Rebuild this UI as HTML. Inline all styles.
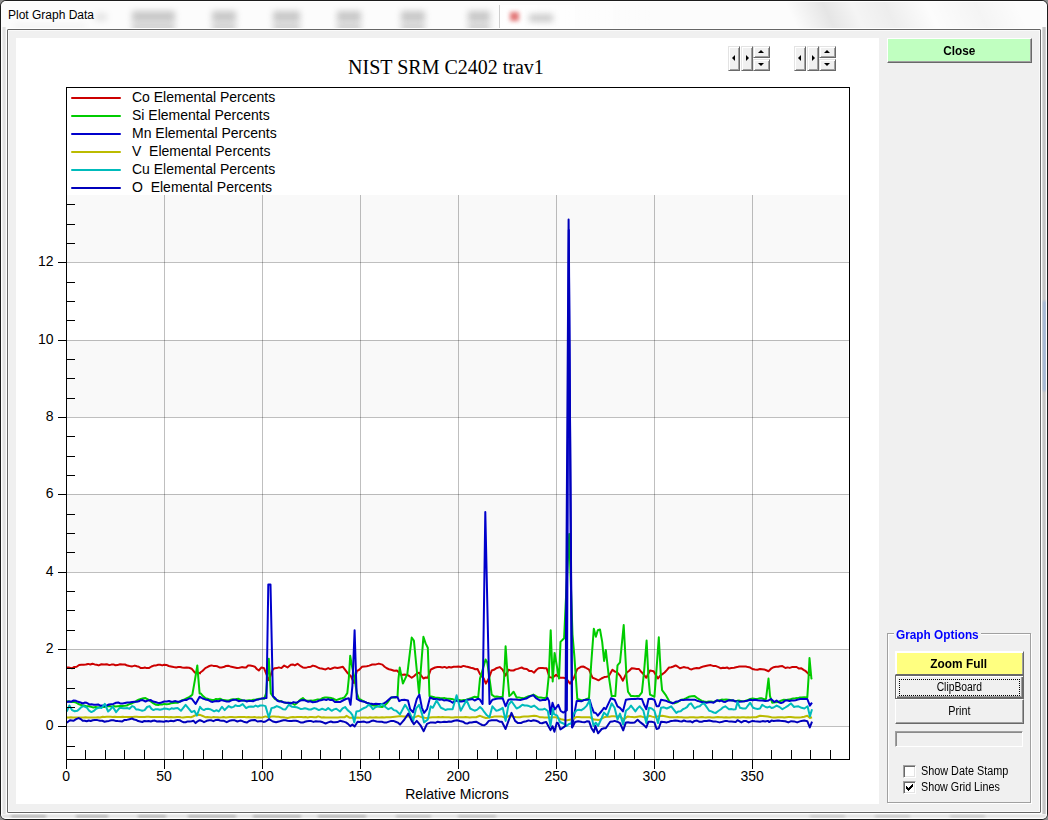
<!DOCTYPE html>
<html><head><meta charset="utf-8"><title>Plot Graph Data</title>
<style>
html,body{margin:0;padding:0}
body{width:1048px;height:820px;overflow:hidden;position:relative;background:#8c8c8c;font-family:"Liberation Sans",sans-serif}
.win{position:absolute;left:0;top:0;width:1046px;height:818px;border:1px solid #1c1c1c;border-radius:6px;background:#fcfcfc;overflow:hidden}
.glass{position:absolute;left:0;top:0;width:1046px;height:818px;box-shadow:inset 0 0 0 1px #fff;border-radius:5px;z-index:3}
.blob{position:absolute;background:#808080;filter:blur(3px);opacity:.42}
.title{position:absolute;left:8px;top:8px;font-size:12px;line-height:14px;color:#000;white-space:nowrap;text-shadow:0 0 6px #fff,0 0 6px #fff}
.client{position:absolute;left:7px;top:29px;width:1032px;height:782px;border:1px solid #666;background:#f0f0f0;box-shadow:0 0 0 1px #fff, inset 0 0 0 1px #fafafa;border-radius:1px}
.panel{position:absolute;left:16px;top:38px;width:863px;height:766px;background:#fff}
.chart{position:absolute;left:0;top:0}
.lg{font-family:"Liberation Sans",sans-serif;font-size:14px;fill:#000}
.ttl{font-family:"Liberation Serif",serif;font-size:20px;fill:#000}
.spin{position:absolute;top:46px;width:42px;height:25px}
.b3{position:absolute;box-sizing:border-box;background:#f0f0f0;border:1px solid;border-color:#e3e3e3 #696969 #696969 #e3e3e3;box-shadow:inset 1px 1px 0 #fff, inset -1px -1px 0 #a0a0a0}
.b3 svg{position:absolute;left:-1px;top:-1px}
.btn{position:absolute;box-sizing:border-box;border:1px solid;border-color:#fff #696969 #696969 #fff;box-shadow:inset -1px -1px 0 #a0a0a0;background:#f0f0f0;text-align:center;font-size:12px;white-space:nowrap}
.btn span{display:inline-block;transform-origin:center;position:relative;top:1px}
.grp{position:absolute;left:887px;top:633px;width:142px;height:168px;border:1px solid #a0a0a0;box-shadow:1px 1px 0 #fff, inset 1px 1px 0 #fff}
.grpt{position:absolute;left:893.6px;top:627.5px;width:83px;background:#f0f0f0;padding:0 2px;font-weight:bold;font-size:12px;line-height:15px;color:#0000ff;white-space:nowrap}
.grpt span,.lbl span{display:inline-block;transform-origin:left center}
.edit{position:absolute;left:895px;top:731px;width:126px;height:14px;border:1px solid;border-color:#a0a0a0 #fff #fff #a0a0a0;box-shadow:inset 1px 1px 0 #8a8a8a;background:#f0f0f0}
.cb{position:absolute;left:903px;width:9px;height:9px;border:1px solid;border-color:#a0a0a0 #fff #fff #a0a0a0;box-shadow:inset 1px 1px 0 #696969, inset -1px -1px 0 #e3e3e3;background:#fff;padding:1px}
#tClose{transform:scaleX(.98)} #tGO{transform:scaleX(.984)} #tZF{transform:scaleX(.988)} #tCB{transform:scaleX(.861)} #tPr{transform:scaleX(.90)} #tDS{transform:scaleX(.903)} #tGL{transform:scaleX(.895)}
.lbl{position:absolute;left:921px;font-size:12px;line-height:14px;white-space:nowrap;color:#000}
</style></head><body>
<div class="win"><div class="glass"></div>
<div class="blob" style="left:131px;top:10px;width:43px;height:11px"></div>
<div class="blob" style="left:131px;top:23px;width:43px;height:7px;opacity:.4"></div>
<div class="blob" style="left:211px;top:10px;width:24px;height:11px"></div>
<div class="blob" style="left:211px;top:23px;width:24px;height:7px;opacity:.4"></div>
<div class="blob" style="left:272px;top:10px;width:27px;height:11px"></div>
<div class="blob" style="left:272px;top:23px;width:27px;height:7px;opacity:.4"></div>
<div class="blob" style="left:336px;top:10px;width:24px;height:11px"></div>
<div class="blob" style="left:336px;top:23px;width:24px;height:7px;opacity:.4"></div>
<div class="blob" style="left:400px;top:10px;width:24px;height:11px"></div>
<div class="blob" style="left:400px;top:23px;width:24px;height:7px;opacity:.4"></div>
<div class="blob" style="left:467px;top:10px;width:22px;height:11px"></div>
<div class="blob" style="left:467px;top:23px;width:22px;height:7px;opacity:.4"></div>
<div class="blob" style="left:94px;top:12px;width:12px;height:8px;opacity:.18"></div><div class="blob" style="left:14px;top:24px;width:70px;height:3px;opacity:.12"></div>
<div style="position:absolute;left:498px;top:4px;width:150px;height:25px;background:linear-gradient(to right,#fff,rgba(255,255,255,0));border-left:1px solid #cfcfcf;filter:blur(.6px)"></div>
<div class="blob" style="left:509px;top:11px;width:9px;height:9px;background:#d02020;opacity:.6;filter:blur(2px)"></div>
<div class="blob" style="left:528px;top:13px;width:24px;height:8px;opacity:.4"></div>
<div style="position:absolute;left:640px;top:1px;width:400px;height:28px;background:linear-gradient(65deg,rgba(0,0,0,0) 38%,rgba(0,0,0,.09) 47%,rgba(0,0,0,.03) 54%,rgba(0,0,0,.06) 62%,rgba(0,0,0,0) 72%,rgba(0,0,0,.03) 84%,rgba(0,0,0,0) 94%)"></div>
<div style="position:absolute;left:1px;top:26px;width:4px;height:788px;background:linear-gradient(to right,#f4f4f4,#dcdcdc 50%,#f0f0f0)"></div>
<div style="position:absolute;left:1041px;top:26px;width:4px;height:788px;background:linear-gradient(to right,#e4e4e4,#bcbcbc 50%,#dcdcdc)"></div>
<div style="position:absolute;left:1042px;top:300px;width:3px;height:90px;background:#9fb6d8;filter:blur(1px)"></div>
<div style="position:absolute;left:0;top:813px;width:1046px;height:4px;background:linear-gradient(to bottom,#f6f6f6,#e2e2e2 50%,#f2f2f2)"></div>
<div class="blob" style="left:10px;top:814px;width:35px;height:3px;opacity:0.5;filter:blur(1.5px)"></div>
<div class="blob" style="left:75px;top:814px;width:32px;height:3px;opacity:0.5;filter:blur(1.5px)"></div>
<div class="blob" style="left:137px;top:814px;width:28px;height:3px;opacity:0.5;filter:blur(1.5px)"></div>
<div class="blob" style="left:187px;top:814px;width:48px;height:3px;opacity:0.5;filter:blur(1.5px)"></div>
<div class="blob" style="left:252px;top:814px;width:48px;height:3px;opacity:0.5;filter:blur(1.5px)"></div>
<div class="blob" style="left:317px;top:814px;width:48px;height:3px;opacity:0.5;filter:blur(1.5px)"></div>
<div class="blob" style="left:395px;top:814px;width:35px;height:3px;opacity:0.4;filter:blur(1.5px)"></div>
<div class="blob" style="left:457px;top:814px;width:38px;height:3px;opacity:0.4;filter:blur(1.5px)"></div>
<div class="blob" style="left:809px;top:814px;width:35px;height:3px;opacity:0.3;filter:blur(1.5px)"></div>
<div class="blob" style="left:874px;top:814px;width:35px;height:3px;opacity:0.3;filter:blur(1.5px)"></div>
<div class="blob" style="left:949px;top:814px;width:35px;height:3px;opacity:0.3;filter:blur(1.5px)"></div>
</div>
<div class="title">Plot Graph Data</div>
<div class="client"></div>
<div class="panel"></div>
<svg class="chart" width="1048" height="820" viewBox="0 0 1048 820">
<rect x="67" y="649" width="781" height="77" fill="#f9f9f9"/>
<rect x="67" y="494" width="781" height="78" fill="#f9f9f9"/>
<rect x="67" y="340" width="781" height="77" fill="#f9f9f9"/>
<rect x="67" y="195" width="781" height="67" fill="#f9f9f9"/>
<path d="M67 726.5H849" stroke="#000" stroke-opacity=".25" stroke-width="1" fill="none" shape-rendering="crispEdges"/>
<path d="M67 649.5H849" stroke="#000" stroke-opacity=".25" stroke-width="1" fill="none" shape-rendering="crispEdges"/>
<path d="M67 572.5H849" stroke="#000" stroke-opacity=".25" stroke-width="1" fill="none" shape-rendering="crispEdges"/>
<path d="M67 494.5H849" stroke="#000" stroke-opacity=".25" stroke-width="1" fill="none" shape-rendering="crispEdges"/>
<path d="M67 417.5H849" stroke="#000" stroke-opacity=".25" stroke-width="1" fill="none" shape-rendering="crispEdges"/>
<path d="M67 340.5H849" stroke="#000" stroke-opacity=".25" stroke-width="1" fill="none" shape-rendering="crispEdges"/>
<path d="M67 262.5H849" stroke="#000" stroke-opacity=".25" stroke-width="1" fill="none" shape-rendering="crispEdges"/>
<path d="M164.5 195V759" stroke="#000" stroke-opacity=".25" stroke-width="1" fill="none" shape-rendering="crispEdges"/>
<path d="M262.5 195V759" stroke="#000" stroke-opacity=".25" stroke-width="1" fill="none" shape-rendering="crispEdges"/>
<path d="M360.5 195V759" stroke="#000" stroke-opacity=".25" stroke-width="1" fill="none" shape-rendering="crispEdges"/>
<path d="M458.5 195V759" stroke="#000" stroke-opacity=".25" stroke-width="1" fill="none" shape-rendering="crispEdges"/>
<path d="M556.5 195V759" stroke="#000" stroke-opacity=".25" stroke-width="1" fill="none" shape-rendering="crispEdges"/>
<path d="M654.5 195V759" stroke="#000" stroke-opacity=".25" stroke-width="1" fill="none" shape-rendering="crispEdges"/>
<path d="M752.5 195V759" stroke="#000" stroke-opacity=".25" stroke-width="1" fill="none" shape-rendering="crispEdges"/>
<polyline points="66.7,667.4 69.3,667.6 72.0,668.3 74.3,666.9 76.7,666.7 79.1,665.0 81.4,664.7 83.6,664.7 85.8,664.4 88.1,663.9 90.3,664.5 92.5,663.8 94.7,664.4 96.7,664.8 98.7,665.4 101.4,664.3 104.1,664.4 106.8,664.2 109.4,665.1 111.4,664.6 113.4,664.4 115.4,665.2 117.4,665.1 120.1,664.2 122.8,664.4 125.0,664.5 127.3,665.6 129.5,666.0 132.2,666.4 134.8,665.6 136.8,666.3 138.8,666.7 140.8,668.1 142.8,668.1 144.8,667.5 146.8,668.1 149.2,667.9 151.5,666.5 153.8,665.6 156.2,665.4 158.2,664.7 160.2,664.8 162.2,665.4 164.2,664.8 166.4,664.9 168.7,666.0 170.9,666.5 173.6,667.1 176.2,667.4 178.2,667.0 180.2,667.0 182.2,667.5 184.2,667.8 186.7,667.5 189.1,667.8 191.6,668.7 194.9,672.7 197.4,672.6 200.0,673.4 200.0,672.7 202.7,670.7 205.3,668.1 207.3,667.1 209.4,666.0 211.4,665.4 213.4,665.9 215.4,666.1 217.4,666.3 219.4,667.4 221.4,667.4 223.6,667.1 225.9,666.0 228.1,665.8 230.3,666.4 232.5,666.9 234.7,667.4 237.0,667.9 239.4,667.7 241.8,667.1 244.1,667.4 246.1,667.4 248.1,665.5 250.1,665.4 252.4,665.9 254.8,666.7 256.8,669.0 258.8,670.5 261.5,667.4 264.1,668.3 268.8,680.1 272.8,669.4 274.8,668.2 276.8,668.1 278.8,667.4 281.5,668.1 284.2,665.6 287.5,667.4 290.8,664.7 292.8,664.4 294.8,665.4 297.5,663.8 300.2,665.8 302.9,667.4 304.9,667.8 306.9,667.4 308.9,666.9 310.9,666.7 312.9,665.6 315.2,666.2 317.6,667.4 319.6,668.2 321.6,668.5 323.6,669.0 325.6,669.4 328.2,668.1 330.2,669.1 332.5,668.2 334.9,667.4 337.4,667.9 340.0,667.4 342.9,666.8 347.3,672.7 351.0,676.3 353.9,682.9 356.8,671.2 359.4,669.6 361.9,666.8 364.4,666.4 366.8,666.2 369.3,665.6 372.2,664.5 375.1,664.6 378.8,663.6 382.4,664.6 384.6,666.7 386.8,668.3 389.0,669.2 391.2,669.7 394.1,670.8 397.1,670.5 399.2,673.2 401.4,674.9 404.4,674.6 407.3,674.9 409.5,676.2 411.7,677.8 413.9,676.2 416.1,674.1 419.0,672.7 423.4,678.5 425.6,677.5 427.8,677.8 430.7,669.7 432.9,668.5 435.1,667.5 437.5,667.0 440.0,667.0 442.4,667.5 444.6,666.9 446.8,667.9 449.0,667.0 451.2,667.5 453.6,666.8 456.1,666.7 458.5,666.5 460.9,667.0 463.4,665.9 465.8,666.5 468.2,667.0 470.7,667.8 473.1,668.3 475.3,669.2 477.5,669.0 480.0,674.1 483.7,678.5 485.9,683.6 488.8,678.5 491.7,670.5 493.9,669.8 496.1,668.3 499.7,667.1 502.7,669.7 505.6,675.6 508.5,669.7 511.1,670.6 513.6,670.5 515.6,669.4 517.7,668.9 519.7,668.1 521.7,667.5 524.2,668.8 526.8,669.0 529.2,670.9 531.7,671.0 534.1,672.7 536.3,670.0 538.5,668.3 540.5,667.9 542.5,667.9 544.6,668.3 546.6,668.3 549.5,677.1 552.4,677.8 556.1,674.9 558.3,676.5 560.5,677.8 563.4,677.8 566.3,678.5 570.0,683.6 573.6,678.5 577.3,669.0 580.9,666.8 583.1,666.5 585.3,667.5 589.0,669.7 592.6,677.8 595.5,678.9 598.5,680.3 601.4,678.5 604.3,677.1 606.5,676.8 608.7,676.3 612.4,669.7 614.6,671.4 616.8,671.9 620.0,675.6 622.9,680.7 626.6,672.7 629.2,670.8 631.7,668.3 634.1,668.6 636.6,668.9 639.0,669.0 641.2,671.8 643.4,674.1 646.3,677.8 650.0,670.5 653.6,671.2 658.0,678.5 660.2,675.7 662.4,674.1 664.6,672.5 666.8,670.1 669.0,667.5 671.2,667.3 673.4,666.5 675.6,665.4 677.8,666.7 680.0,668.3 683.6,667.1 685.6,667.5 687.7,667.7 689.7,669.0 691.7,669.4 694.1,668.4 696.6,668.1 699.0,668.3 701.2,667.2 703.4,666.4 705.6,665.9 707.8,665.4 710.7,665.1 713.6,666.1 716.0,666.1 718.5,667.1 720.9,668.3 723.0,667.7 725.0,668.0 727.1,667.5 729.1,668.6 731.2,668.0 734.1,667.7 737.0,667.1 739.2,666.5 741.4,666.5 743.6,666.4 745.8,666.5 748.0,667.1 750.2,667.6 752.4,669.0 754.9,669.5 757.5,669.7 760.0,669.0 762.0,669.2 764.1,669.4 766.3,670.3 768.5,671.2 771.5,668.3 773.7,667.2 775.8,666.7 778.0,666.8 780.2,666.2 782.4,666.1 785.4,668.0 787.6,667.4 789.7,667.9 791.9,667.1 794.3,666.9 796.6,667.0 799.0,668.6 801.4,668.3 803.6,669.8 805.8,671.2 809.5,674.9 812.0,674.9" fill="none" stroke="#cc0000" stroke-width="2" stroke-linejoin="round" stroke-linecap="butt"/>
<polyline points="66.7,701.5 68.9,701.3 71.2,701.9 73.4,702.1 75.5,702.3 77.6,703.5 79.8,704.6 81.9,705.2 84.0,705.5 86.3,706.2 88.7,706.3 91.1,706.9 93.4,707.5 95.7,707.0 98.1,707.4 100.4,707.0 102.7,706.8 104.8,706.9 107.0,706.3 109.1,706.1 111.3,706.6 113.4,706.1 115.6,706.5 117.9,706.3 120.1,706.1 122.3,706.0 124.6,705.8 126.8,705.5 128.8,704.4 130.8,703.8 132.8,702.8 134.8,702.1 137.0,700.5 139.3,699.4 141.5,698.8 143.5,698.2 145.5,698.1 148.2,699.6 150.8,701.5 153.5,703.3 156.2,704.8 158.2,705.0 160.2,704.3 162.2,704.6 164.2,703.9 166.4,704.2 168.7,704.0 170.9,703.2 173.1,702.9 175.4,702.7 177.6,702.8 179.9,701.3 182.2,700.2 184.6,699.4 186.9,698.1 189.6,696.9 192.3,694.8 194.9,680.1 197.3,665.4 199.6,693.4 200.7,693.4 203.0,696.1 205.3,698.1 207.5,698.7 209.8,699.6 212.0,700.1 214.0,700.1 216.0,699.0 218.0,699.3 220.0,698.8 222.2,699.7 224.5,700.1 226.7,700.4 228.7,700.4 230.7,699.8 232.7,699.3 234.7,699.6 236.7,698.9 238.7,698.8 240.9,699.8 243.2,700.6 245.4,700.8 247.4,700.4 249.4,700.2 251.4,700.5 253.4,699.8 255.5,699.8 257.7,699.1 259.8,698.8 262.0,698.7 264.1,698.8 266.1,693.4 268.8,658.7 270.8,693.4 274.8,698.8 276.8,700.0 278.8,700.8 280.8,700.9 282.8,702.1 284.8,702.6 286.8,702.9 288.8,702.8 290.8,702.8 292.8,703.7 294.8,704.8 296.8,703.2 298.9,701.1 300.9,699.3 302.9,698.1 304.9,699.9 306.9,700.8 308.9,700.8 310.9,700.5 312.9,700.7 314.9,700.1 316.9,699.6 318.9,699.6 320.9,699.1 322.9,698.0 324.9,697.6 326.9,697.4 329.1,697.7 331.4,698.1 333.6,698.8 336.3,700.1 340.0,698.8 342.2,698.2 344.4,697.5 347.3,693.1 348.8,678.5 350.2,655.8 352.4,668.3 354.6,678.5 356.8,693.1 359.0,699.0 361.4,700.0 363.9,701.4 366.3,702.7 368.7,703.3 371.2,705.0 373.6,705.6 375.8,705.8 378.0,706.3 380.2,706.7 382.4,707.0 384.6,705.6 386.8,703.4 391.2,697.5 393.3,697.2 395.4,697.5 397.5,696.8 398.5,678.5 399.7,667.5 402.9,683.6 407.3,674.1 411.7,637.6 413.9,640.5 419.0,693.1 423.4,636.8 425.6,643.4 427.8,647.8 429.5,696.1 432.3,696.8 435.1,697.5 437.5,697.8 440.0,698.1 442.4,698.3 444.7,698.1 447.1,698.8 449.4,698.8 451.8,698.9 454.1,699.7 456.5,700.3 459.0,699.9 461.4,700.5 463.8,700.0 466.3,699.7 468.7,699.0 471.6,698.0 474.6,696.8 478.2,697.5 480.0,678.5 482.2,671.2 485.6,659.5 487.3,662.4 489.5,678.5 491.7,694.6 494.6,696.8 496.6,696.6 498.6,696.8 500.7,696.9 502.7,696.8 504.1,678.5 505.6,646.3 507.8,678.5 509.3,696.1 511.5,694.2 513.6,691.7 516.6,697.5 519.0,697.4 521.5,698.1 523.9,698.3 526.3,697.1 528.6,696.2 531.0,695.8 533.4,694.6 536.0,696.1 538.5,697.5 540.5,697.6 542.5,697.8 544.6,697.9 546.6,697.5 548.8,675.6 550.7,630.2 552.7,681.4 554.6,652.9 559.0,678.5 560.5,641.9 564.1,638.3 566.3,590.7 569.2,534.0 572.5,634.6 574.4,656.6 577.3,699.0 579.8,699.7 582.4,700.5 584.6,699.9 586.8,699.0 589.0,698.3 591.2,663.9 593.8,628.8 595.9,636.8 597.8,630.2 600.0,629.5 602.2,641.9 604.1,661.0 605.8,650.0 608.7,675.6 611.7,696.1 615.3,696.1 617.5,665.4 620.0,662.4 623.7,625.1 626.6,678.5 628.0,691.7 631.0,696.1 633.0,696.1 635.0,696.3 637.0,696.1 639.0,696.1 641.9,692.4 644.1,671.2 646.6,640.5 648.5,678.5 650.0,694.6 652.2,695.7 654.4,696.8 656.6,668.3 658.8,637.3 661.0,678.5 662.1,690.2 665.4,694.6 669.7,701.9 671.9,702.6 674.1,703.4 676.5,702.6 679.0,701.1 681.4,699.7 683.9,699.1 686.3,698.2 688.8,696.8 691.7,696.2 694.6,696.1 697.2,698.0 699.7,699.7 701.9,700.9 704.1,701.5 706.3,701.9 708.7,701.5 711.2,701.5 713.6,701.9 716.5,701.0 719.5,700.2 721.7,699.6 723.9,699.7 726.1,699.4 728.3,699.7 730.5,700.1 732.6,700.5 734.8,700.9 737.0,700.8 739.4,700.6 741.9,701.3 744.3,701.2 747.2,700.3 750.2,699.0 752.7,698.5 755.1,699.0 757.5,698.9 760.0,698.3 762.0,698.3 764.0,699.2 766.0,699.0 768.5,678.5 770.0,696.1 772.2,702.7 775.1,702.2 778.0,701.9 781.0,700.8 783.9,699.7 786.3,700.0 788.8,699.6 791.2,699.0 793.2,698.4 795.3,698.3 797.3,698.1 799.4,697.6 801.4,697.5 804.3,697.2 807.3,697.5 808.5,678.5 809.5,658.0 811.4,678.5 812.0,677.8" fill="none" stroke="#00cc00" stroke-width="2" stroke-linejoin="round" stroke-linecap="butt"/>
<polyline points="66.7,702.1 69.0,701.6 71.3,701.7 73.7,700.5 76.0,700.8 78.2,701.8 80.5,702.5 82.7,703.5 84.7,702.6 86.7,702.8 89.4,704.4 91.6,704.3 93.8,704.8 95.9,704.8 98.1,704.4 100.3,705.7 102.5,705.6 104.6,705.9 106.8,705.5 109.0,704.5 111.2,704.2 113.4,703.9 116.1,702.8 118.3,702.5 120.6,703.6 122.8,703.5 125.0,702.9 127.3,702.4 129.5,702.5 132.2,702.0 134.8,701.7 136.8,701.8 138.8,701.3 140.8,700.2 142.8,700.1 145.5,701.5 148.2,700.4 150.8,700.1 153.0,701.5 155.3,702.0 157.5,702.8 159.5,702.9 161.5,702.5 164.2,701.5 166.9,701.5 169.0,701.0 171.2,701.8 173.3,701.5 175.5,701.1 177.6,701.7 179.8,701.7 182.0,700.8 184.2,700.1 186.7,699.9 189.1,698.5 191.6,698.5 195.6,703.9 199.6,696.8 200.0,696.8 202.7,698.5 205.3,699.4 208.0,699.9 210.7,701.5 212.7,701.9 214.7,701.3 216.7,701.1 218.7,701.2 221.4,700.1 224.1,700.9 226.7,701.5 229.0,701.6 231.4,700.4 233.8,699.8 236.1,699.8 238.7,701.2 240.7,700.8 242.7,700.4 244.8,700.6 246.8,701.5 249.0,700.9 251.2,700.9 253.4,701.2 256.1,699.8 258.8,699.4 261.4,698.6 263.9,698.2 266.5,698.0 268.3,584.4 270.5,584.4 272.9,696.1 275.2,698.2 277.5,700.8 279.5,701.6 281.5,701.5 283.5,702.3 285.5,702.8 288.1,702.8 290.8,703.5 293.5,702.1 296.2,702.8 298.4,701.7 300.7,700.4 302.9,700.1 305.5,700.6 308.2,701.7 310.4,701.3 312.7,702.2 314.9,702.1 317.2,701.5 319.5,700.4 321.9,700.0 324.2,699.4 326.2,700.0 328.2,699.1 330.3,700.1 332.3,699.8 334.9,702.1 337.4,702.0 340.0,702.1 342.9,700.5 345.9,699.0 348.8,698.3 350.5,704.8 352.4,685.8 354.6,630.2 356.8,699.0 359.4,700.5 361.9,701.2 364.4,701.8 366.8,702.7 369.3,703.4 371.5,703.8 373.6,704.3 375.8,703.7 378.0,704.1 380.9,704.1 383.9,703.4 386.3,701.7 388.8,699.6 391.2,697.5 393.3,697.3 395.4,697.1 397.5,697.2 399.2,701.2 401.8,699.9 404.4,699.7 408.0,700.5 410.2,709.2 413.1,712.2 416.8,699.0 419.4,694.6 421.9,707.8 424.1,712.9 427.0,709.2 430.0,697.5 433.6,699.0 436.6,698.9 439.5,699.7 441.7,699.4 443.9,700.4 446.1,700.0 448.3,700.5 450.5,701.2 452.6,702.7 454.8,701.1 457.0,700.5 459.2,701.5 461.4,701.6 464.4,701.1 467.3,699.7 469.9,699.6 472.4,699.0 474.6,700.5 478.2,698.7 480.0,699.7 482.6,704.0 485.3,512.0 489.5,704.1 492.4,699.7 494.5,699.2 496.5,698.8 498.6,698.6 500.6,698.5 502.7,698.3 505.6,706.3 508.5,699.7 510.9,699.3 513.2,699.6 515.6,699.4 518.0,699.7 521.0,699.9 523.9,699.0 526.3,698.6 528.6,697.2 531.0,695.9 533.4,695.3 536.0,698.1 538.5,699.7 540.0,700.5 542.8,700.1 545.5,700.1 547.4,697.8 549.0,700.9 550.5,714.1 552.5,702.8 554.8,709.5 558.3,704.8 560.7,711.0 563.4,712.6 566.9,710.2 568.8,230.1 572.0,727.0 576.7,700.9 579.0,700.9 581.4,701.3 584.1,699.9 586.8,699.7 589.6,699.7 591.5,706.3 593.9,712.6 595.8,713.0 597.8,715.7 601.7,711.0 604.0,707.9 605.8,709.2 610.9,698.3 614.6,699.7 617.5,706.3 620.0,707.8 622.9,711.4 625.9,699.7 628.8,699.2 631.7,699.0 633.7,699.0 635.8,699.0 637.8,698.6 639.9,699.0 641.9,699.0 644.1,704.8 646.3,709.2 648.5,699.0 651.5,698.8 654.4,699.7 656.6,706.3 658.8,706.3 661.0,699.7 663.4,700.2 665.9,700.7 668.3,701.9 670.5,702.5 672.7,703.4 675.6,701.8 678.5,701.2 680.9,700.1 683.4,700.0 685.8,699.7 688.0,699.4 690.2,699.8 692.4,699.7 694.6,699.7 697.0,700.7 699.5,701.4 701.9,701.9 704.2,702.3 706.6,702.7 708.9,702.2 711.3,702.3 713.6,702.7 717.3,700.2 719.3,701.2 721.3,700.6 723.3,701.7 725.3,701.9 729.0,700.2 731.0,700.6 733.0,700.2 735.0,701.4 737.0,701.2 739.4,701.7 741.9,701.4 744.3,701.2 747.2,700.7 750.2,699.7 752.7,700.3 755.1,699.7 757.5,700.3 760.0,700.5 762.6,700.6 765.2,701.1 767.8,700.8 771.0,699.0 774.4,701.9 776.6,700.5 778.8,702.2 781.0,703.1 783.2,702.2 785.4,700.5 787.4,700.5 789.5,700.9 791.5,700.5 793.6,700.5 795.6,700.2 797.8,699.6 800.0,699.0 802.2,698.9 804.4,699.0 807.3,699.0 809.9,705.6 812.0,702.7" fill="none" stroke="#0000cc" stroke-width="2" stroke-linejoin="round" stroke-linecap="butt"/>
<polyline points="66.7,717.5 68.8,717.4 70.9,717.3 73.0,717.6 75.0,717.5 77.1,717.6 79.2,717.6 81.3,717.6 83.4,717.5 85.5,717.3 87.6,717.6 89.7,717.6 91.8,717.5 93.8,717.5 95.9,717.6 98.0,717.3 100.1,717.5 102.7,716.8 104.7,716.9 106.7,716.7 108.7,716.7 110.7,716.7 112.7,716.9 114.7,716.7 116.7,717.0 118.7,717.1 120.7,716.9 122.7,716.8 124.8,716.9 126.8,717.0 128.8,717.0 130.8,717.0 132.8,717.0 134.8,716.8 136.8,716.8 138.8,716.9 140.8,717.1 142.8,716.9 144.8,717.0 146.8,716.8 148.8,716.8 150.8,716.9 152.8,717.1 154.8,717.1 156.8,717.1 158.8,717.0 160.8,717.1 162.8,717.1 164.8,717.1 166.8,716.9 168.9,717.3 170.9,717.0 172.9,717.3 174.9,717.3 176.9,716.9 178.9,717.1 180.9,717.3 182.9,717.4 184.9,717.2 186.9,717.1 188.9,717.1 190.9,717.2 192.9,716.5 194.9,715.5 197.2,715.0 199.6,714.8 200.0,714.8 202.7,716.0 205.3,717.2 207.4,717.1 209.4,717.2 211.5,717.4 213.5,717.1 215.6,717.3 217.6,717.2 219.7,717.4 221.7,717.3 223.8,717.1 225.8,717.4 227.9,717.2 229.9,717.0 232.0,717.0 234.1,717.2 236.1,717.2 238.2,717.1 240.2,717.1 242.3,717.1 244.3,717.1 246.4,717.3 248.4,717.0 250.5,717.3 252.5,717.3 254.6,717.0 256.6,717.4 258.7,717.3 260.7,717.4 262.8,717.2 265.5,716.4 268.8,717.5 272.1,716.4 274.2,716.5 276.4,716.7 278.5,716.8 280.7,717.2 282.8,717.2 285.1,717.6 287.5,717.9 290.8,717.2 292.9,717.1 295.0,717.2 297.1,717.1 299.3,717.0 301.4,717.0 303.5,717.3 305.6,717.1 307.7,717.4 309.9,717.1 312.0,717.1 314.1,717.2 316.2,717.2 318.2,716.4 321.6,717.5 323.6,717.3 325.7,717.4 327.7,717.6 329.8,717.5 331.8,717.5 333.9,717.4 335.9,717.4 338.0,717.4 340.0,717.2 342.2,717.3 344.4,717.3 346.6,715.8 349.5,717.7 351.5,717.8 353.6,717.5 355.6,717.7 357.7,717.6 359.7,717.7 361.8,717.6 363.8,717.5 365.8,717.4 367.9,717.7 369.9,717.3 372.0,717.5 374.0,717.4 376.0,717.3 378.1,717.5 380.1,717.6 382.2,717.3 384.2,717.4 386.3,717.2 388.3,717.3 390.5,717.2 392.7,716.9 394.9,716.7 397.0,716.5 399.2,716.3 401.4,716.3 403.9,716.6 406.3,716.5 408.8,716.6 411.0,717.0 413.1,717.7 415.7,716.9 418.3,715.8 421.9,717.3 424.9,717.8 427.8,718.0 430.0,717.6 432.2,717.3 434.3,717.2 436.4,717.2 438.5,717.1 440.6,717.2 442.7,717.1 444.7,717.2 446.8,717.2 448.9,717.3 451.0,717.5 453.1,717.4 455.2,717.3 457.3,717.3 459.4,717.3 461.5,717.3 463.6,717.2 465.6,717.1 467.7,717.2 469.8,717.5 471.9,717.2 474.0,717.3 476.1,717.3 480.0,715.8 482.9,717.0 485.9,718.0 488.1,717.8 490.2,717.2 492.4,716.9 494.6,716.6 497.0,716.5 499.5,716.6 501.9,716.6 505.6,717.7 509.3,715.8 511.5,716.2 513.6,716.7 515.8,717.1 518.0,717.3 520.0,717.3 522.0,716.7 524.0,716.6 526.0,716.6 528.1,716.5 530.1,716.2 532.1,716.0 534.1,715.8 536.3,716.0 538.5,716.6 540.0,717.3 542.2,717.3 544.5,717.5 546.7,717.4 548.9,717.4 551.1,717.5 553.4,717.2 555.6,717.3 558.4,718.1 561.1,719.2 563.5,719.7 565.8,720.4 568.5,720.0 571.2,719.6 574.3,718.0 576.7,716.9 578.9,717.0 581.1,717.2 583.4,717.2 585.6,717.2 587.8,717.3 590.0,717.3 593.9,719.6 596.6,719.8 599.3,720.0 601.6,718.7 604.0,717.3 606.6,716.8 609.1,716.7 611.7,716.3 613.8,716.3 615.9,716.6 617.9,716.6 620.0,716.6 623.7,719.5 627.3,716.6 629.7,716.8 632.2,716.9 634.6,717.3 637.5,716.7 640.5,716.3 643.4,717.1 646.3,717.7 649.3,715.8 652.2,716.6 655.1,717.3 657.5,716.6 660.0,716.1 662.4,715.8 664.8,716.3 667.3,716.8 669.7,717.3 671.7,717.3 673.7,717.2 675.7,717.3 677.7,717.1 679.7,717.2 681.8,717.3 683.8,717.5 685.8,717.4 687.8,717.5 689.8,717.3 691.8,717.2 693.8,717.2 695.8,717.5 697.8,717.4 699.8,717.2 701.8,717.1 703.9,717.3 705.9,717.4 707.9,717.3 709.9,717.2 711.9,717.4 713.9,717.5 715.9,717.2 717.9,717.1 719.9,717.2 721.9,717.3 724.0,717.4 726.0,717.2 728.0,717.4 730.0,717.4 732.0,717.3 734.0,717.2 736.0,717.5 738.0,717.2 740.0,717.4 742.0,717.2 744.0,717.2 746.1,717.4 748.1,717.2 750.1,717.5 752.1,717.3 754.1,717.2 756.1,717.3 760.0,715.8 762.6,716.0 765.2,716.3 767.8,716.6 771.5,717.3 773.6,717.4 775.8,717.5 777.9,717.2 780.0,717.3 782.2,717.2 784.3,717.5 786.5,717.2 788.6,717.1 790.7,717.1 792.9,717.3 795.0,717.5 797.1,717.5 799.3,717.4 801.4,717.3 804.3,716.7 807.3,715.8 809.9,718.0 812.0,717.3" fill="none" stroke="#bbbb00" stroke-width="2" stroke-linejoin="round" stroke-linecap="butt"/>
<polyline points="66.7,711.5 69.4,705.5 72.0,710.1 74.7,711.2 77.4,710.8 79.4,708.9 81.4,707.1 83.4,706.1 86.7,707.5 89.1,710.6 91.4,712.1 93.8,710.9 96.1,708.8 98.8,707.6 101.4,708.1 104.8,703.9 108.1,711.5 110.4,709.4 112.8,706.8 116.1,712.1 119.4,708.1 121.4,708.0 123.4,708.2 125.5,708.2 127.5,708.1 129.5,708.8 132.1,706.1 134.1,706.9 136.1,709.5 138.1,709.5 140.2,710.1 142.2,710.8 144.6,710.1 147.1,707.0 149.5,706.1 151.5,708.9 153.5,710.1 155.6,709.2 157.8,709.2 159.9,709.7 162.1,709.3 164.2,708.4 166.8,708.8 169.5,709.5 171.5,708.3 173.6,708.8 175.6,708.2 177.6,708.1 180.9,710.8 185.6,704.8 191.6,712.1 194.3,710.8 196.9,715.5 199.6,708.1 200.0,706.8 202.0,709.2 204.0,710.1 206.0,708.9 208.0,708.8 210.0,709.2 212.0,710.1 214.2,711.3 216.5,710.2 218.7,711.5 222.0,706.8 224.7,710.1 226.7,707.9 228.7,706.1 231.4,707.5 233.4,706.9 235.4,705.2 237.4,706.1 239.4,706.1 242.7,704.1 246.1,708.1 248.5,706.8 251.0,706.4 253.4,706.8 255.6,705.6 257.9,706.7 260.1,705.5 262.8,705.4 265.5,706.1 268.8,717.5 271.5,708.1 274.1,707.5 276.8,706.1 280.2,707.5 282.9,709.2 285.5,709.5 288.8,704.8 292.2,706.8 294.4,706.9 296.7,707.3 298.9,708.1 300.9,709.1 302.9,708.7 304.9,708.2 306.9,708.8 308.9,709.5 310.9,709.5 314.2,708.1 316.5,708.8 318.9,710.1 322.2,708.8 325.6,710.1 328.2,708.1 331.6,710.8 334.0,709.4 336.3,708.8 340.0,711.5 342.6,708.4 345.1,707.0 347.6,710.1 350.2,712.2 352.4,715.1 354.3,722.4 356.4,711.4 359.1,711.0 361.9,709.2 364.1,708.0 366.3,707.1 368.5,704.8 370.7,706.1 372.9,709.2 375.1,707.4 377.3,706.6 379.5,706.2 381.7,704.1 385.4,707.0 388.3,709.2 391.2,707.8 393.8,710.1 396.3,710.7 400.0,714.4 405.1,704.8 408.8,710.7 413.1,720.9 416.1,708.5 419.0,704.8 421.9,713.6 424.1,722.4 427.8,719.5 430.7,706.3 432.9,707.8 436.6,700.5 440.9,707.8 443.1,708.7 445.3,710.0 447.7,709.3 450.2,709.3 452.6,709.2 456.6,695.3 460.7,710.7 466.5,700.2 470.2,708.5 472.4,709.6 474.6,710.7 477.3,709.6 480.0,707.0 482.2,709.0 484.4,712.2 486.9,715.3 489.5,717.3 492.4,706.3 496.1,710.7 498.3,710.2 500.5,709.3 502.7,707.8 505.6,720.9 508.5,704.8 511.5,701.2 516.6,708.5 519.5,707.1 522.4,704.8 524.6,705.5 526.8,705.6 529.0,706.1 531.2,707.0 534.1,705.6 536.3,707.2 538.5,709.2 540.0,709.5 542.4,709.6 544.7,708.7 547.8,711.0 550.5,725.9 552.9,708.7 554.0,714.1 557.2,715.7 559.9,722.0 563.4,723.5 566.5,725.9 568.9,723.9 571.2,723.5 573.6,714.1 576.7,710.2 579.0,709.7 581.4,710.2 584.1,708.4 586.8,705.6 589.6,700.5 591.5,715.7 593.5,725.9 595.8,722.7 598.1,725.9 601.7,718.0 604.0,712.6 607.3,715.8 611.7,703.4 614.6,707.8 617.5,719.5 620.0,713.6 623.2,724.6 625.9,710.7 628.8,708.5 631.0,705.6 635.4,711.4 637.5,708.4 639.7,706.3 643.4,710.7 646.3,723.1 649.0,707.8 651.7,708.5 654.4,710.7 658.0,723.1 661.0,707.8 663.9,707.3 666.8,708.5 669.0,707.5 671.2,706.3 676.3,712.9 678.5,711.4 680.7,711.3 682.9,709.2 684.9,708.4 687.0,707.2 689.0,704.4 691.0,703.4 694.6,708.5 697.2,706.7 699.7,706.3 701.9,704.1 704.1,703.4 709.2,710.7 711.4,711.4 713.6,712.5 715.8,712.9 718.3,711.0 720.9,709.2 723.1,707.3 725.3,706.3 729.0,709.2 731.2,709.1 733.4,709.4 735.6,709.2 737.5,701.9 740.0,707.8 742.9,708.5 745.8,708.5 750.2,702.7 753.1,707.8 755.4,708.5 757.7,708.9 760.0,708.5 762.2,704.8 765.6,707.0 767.6,707.4 769.6,706.6 771.6,708.0 773.6,707.5 776.6,705.6 779.5,707.0 782.4,709.2 785.3,707.5 788.3,705.6 790.9,703.4 794.1,707.0 796.3,706.4 798.5,706.3 801.5,707.8 804.4,708.5 807.6,706.3 809.9,716.6 812.0,709.2" fill="none" stroke="#00bbbb" stroke-width="2" stroke-linejoin="round" stroke-linecap="butt"/>
<polyline points="66.7,722.8 70.0,720.2 73.4,720.8 76.1,719.1 78.7,718.1 80.7,719.1 82.7,720.8 84.7,720.7 86.7,721.2 88.7,720.5 90.7,721.0 92.7,720.3 94.7,719.9 97.4,720.1 100.1,720.8 102.3,720.8 104.6,721.7 106.8,721.2 109.0,720.9 111.2,720.2 113.4,720.2 115.6,720.9 117.9,721.1 120.1,721.2 122.3,721.4 124.6,719.9 126.8,719.9 129.4,719.2 132.1,718.5 134.1,719.6 136.1,719.9 138.1,721.1 140.2,721.5 142.3,722.0 144.4,720.9 146.6,721.3 148.7,721.0 150.8,721.5 152.8,720.7 154.8,720.6 157.0,721.5 159.3,721.3 161.5,721.5 163.8,721.8 166.2,721.0 168.6,721.4 170.9,720.8 173.5,721.2 175.6,720.5 177.6,719.9 179.6,720.2 181.6,721.4 183.6,722.2 185.6,722.2 187.6,721.4 189.6,721.6 191.6,721.3 193.6,720.8 195.6,723.1 197.6,721.3 199.6,720.2 200.0,720.2 202.0,721.0 204.0,722.2 206.7,720.8 209.4,720.2 211.4,720.3 213.4,721.2 216.0,719.9 218.0,719.8 220.0,720.5 222.0,720.8 224.0,720.8 226.7,722.2 229.4,720.8 232.1,720.2 234.8,720.3 237.4,721.5 240.1,720.6 242.3,721.1 244.6,722.1 246.8,722.6 249.1,721.0 251.4,720.2 254.8,719.9 257.4,721.5 259.4,721.3 261.4,721.1 263.5,721.9 265.5,721.5 269.2,719.2 272.8,721.5 276.1,722.2 278.8,721.6 281.5,720.8 283.5,720.3 285.5,720.3 287.5,720.7 289.5,720.9 291.5,721.0 293.5,720.8 295.9,720.8 298.2,721.3 300.5,722.4 302.9,722.6 304.9,721.8 306.9,721.2 309.1,721.0 311.3,721.1 313.5,721.9 315.8,721.2 318.0,721.5 320.2,721.5 322.9,722.3 325.6,723.5 328.2,722.4 330.9,721.5 332.9,722.3 334.9,722.2 337.4,722.1 340.0,720.8 342.9,721.4 345.9,722.4 348.0,723.9 350.2,726.1 352.4,724.6 354.6,726.5 357.6,721.7 359.8,722.1 362.0,721.7 364.1,721.6 366.3,722.4 368.7,722.3 371.2,721.1 373.6,720.6 376.6,721.5 379.5,721.7 381.9,721.8 384.4,722.6 386.8,722.4 389.0,721.6 391.2,720.9 393.4,720.9 395.6,721.7 397.8,722.6 400.0,724.6 402.2,722.1 404.4,719.5 408.3,713.6 411.7,720.9 413.9,724.2 416.8,720.9 420.5,725.3 423.7,731.2 427.0,723.9 430.7,722.4 433.0,722.5 435.4,722.8 437.7,721.7 440.1,722.3 442.4,722.1 444.6,721.8 446.8,721.9 449.0,721.4 451.2,721.7 454.1,720.7 457.0,720.2 459.9,721.0 462.9,721.7 465.1,723.2 467.3,723.6 469.5,722.5 471.7,722.4 473.9,722.0 476.1,721.7 480.0,723.9 482.2,725.0 484.4,725.3 486.6,723.7 488.8,720.9 491.7,720.2 494.6,720.2 497.0,720.3 499.5,721.7 501.9,721.7 505.6,729.0 508.5,720.9 511.5,712.9 515.1,720.9 518.0,723.1 521.0,723.0 523.9,721.7 526.3,721.3 528.6,720.4 531.0,721.1 533.4,720.2 536.0,720.8 538.5,721.7 540.0,723.1 542.1,723.2 544.1,722.5 546.2,722.0 548.6,726.6 550.5,730.1 552.5,726.2 554.4,731.7 556.8,722.7 558.3,723.5 560.4,729.4 563.4,727.4 565.4,725.9 568.6,219.6 572.2,727.6 575.1,722.0 578.2,721.2 582.1,722.0 584.5,722.3 586.8,721.3 589.2,721.6 591.5,728.2 593.9,732.1 595.4,725.9 598.1,733.3 601.7,729.0 604.0,728.2 605.8,728.3 610.2,721.7 612.4,721.6 614.6,720.9 617.3,721.7 620.0,723.1 623.2,730.4 625.9,722.4 628.1,722.3 630.2,722.8 632.4,722.8 634.6,722.4 637.6,719.8 640.5,722.4 643.4,724.6 646.3,727.5 648.5,721.7 651.5,721.7 654.4,722.4 656.6,729.0 658.8,728.3 661.0,721.7 663.9,721.9 666.8,722.4 669.0,721.7 671.2,720.9 673.3,720.8 675.4,720.5 677.5,720.7 679.6,721.3 681.8,721.5 683.9,720.5 686.0,721.2 688.1,721.5 690.2,721.2 692.4,722.4 694.6,720.9 697.0,720.6 699.5,721.8 701.9,721.7 704.3,720.9 706.8,721.1 709.2,720.6 711.3,721.0 713.3,721.5 715.4,721.4 717.4,721.9 719.5,722.4 722.4,721.7 725.3,720.9 727.4,721.1 729.4,721.6 731.5,721.6 733.5,721.8 735.6,722.1 737.5,720.2 741.4,722.4 743.6,721.1 745.8,720.9 748.7,722.4 752.4,720.9 754.9,721.3 757.5,721.4 760.0,721.7 762.6,721.1 765.2,721.5 767.8,720.9 769.3,722.1 771.5,720.6 773.7,721.0 775.9,720.7 778.0,720.4 780.2,720.8 782.4,720.9 785.3,721.2 788.3,722.4 791.2,721.2 794.2,721.4 797.1,722.4 799.2,721.6 801.4,720.9 804.3,720.6 807.3,721.2 809.8,727.5 812.0,721.7" fill="none" stroke="#0000bb" stroke-width="2" stroke-linejoin="round" stroke-linecap="butt"/>
<path d="M66.5 87.5H849.5V759.5H66.5Z M67 746.5H75 M58 726.5H66 M67 707.5H75 M67 688.5H75 M67 668.5H75 M58 649.5H66 M67 630.5H75 M67 610.5H75 M67 591.5H75 M58 572.5H66 M67 552.5H75 M67 533.5H75 M67 514.5H75 M58 494.5H66 M67 475.5H75 M67 456.5H75 M67 436.5H75 M58 417.5H66 M67 398.5H75 M67 378.5H75 M67 359.5H75 M58 340.5H66 M67 320.5H75 M67 301.5H75 M67 282.5H75 M58 262.5H66 M67 243.5H75 M67 224.5H75 M67 204.5H75 M66.5 759V769 M85.5 750V759 M105.5 750V759 M124.5 750V759 M144.5 750V759 M164.5 759V769 M183.5 750V759 M203.5 750V759 M222.5 750V759 M242.5 750V759 M262.5 759V769 M281.5 750V759 M301.5 750V759 M320.5 750V759 M340.5 750V759 M360.5 759V769 M379.5 750V759 M399.5 750V759 M418.5 750V759 M438.5 750V759 M458.5 759V769 M477.5 750V759 M497.5 750V759 M516.5 750V759 M536.5 750V759 M556.5 759V769 M575.5 750V759 M595.5 750V759 M614.5 750V759 M634.5 750V759 M654.5 759V769 M673.5 750V759 M693.5 750V759 M712.5 750V759 M732.5 750V759 M752.5 759V769 M771.5 750V759 M791.5 750V759 M810.5 750V759 M830.5 750V759" stroke="#000" stroke-width="1" fill="none" shape-rendering="crispEdges"/>
<path d="M72 98H120" stroke="#cc0000" stroke-width="2" fill="none" stroke-linecap="round"/>
<text x="132" y="101.5" class="lg">Co Elemental Percents</text>
<path d="M72 116H120" stroke="#00cc00" stroke-width="2" fill="none" stroke-linecap="round"/>
<text x="132" y="119.5" class="lg">Si Elemental Percents</text>
<path d="M72 134H120" stroke="#0000cc" stroke-width="2" fill="none" stroke-linecap="round"/>
<text x="132" y="137.5" class="lg">Mn Elemental Percents</text>
<path d="M72 152H120" stroke="#bbbb00" stroke-width="2" fill="none" stroke-linecap="round"/>
<text x="132" y="155.5" class="lg">V  Elemental Percents</text>
<path d="M72 170H120" stroke="#00bbbb" stroke-width="2" fill="none" stroke-linecap="round"/>
<text x="132" y="173.5" class="lg">Cu Elemental Percents</text>
<path d="M72 188H120" stroke="#0000bb" stroke-width="2" fill="none" stroke-linecap="round"/>
<text x="132" y="191.5" class="lg">O  Elemental Percents</text>
<text x="53.5" y="729.6" class="lg" text-anchor="end">0</text>
<text x="53.5" y="652.6" class="lg" text-anchor="end">2</text>
<text x="53.5" y="575.6" class="lg" text-anchor="end">4</text>
<text x="53.5" y="497.6" class="lg" text-anchor="end">6</text>
<text x="53.5" y="420.6" class="lg" text-anchor="end">8</text>
<text x="53.5" y="343.6" class="lg" text-anchor="end">10</text>
<text x="53.5" y="265.6" class="lg" text-anchor="end">12</text>
<text x="66.1" y="780.5" class="lg" text-anchor="middle">0</text>
<text x="164.1" y="780.5" class="lg" text-anchor="middle">50</text>
<text x="262.1" y="780.5" class="lg" text-anchor="middle">100</text>
<text x="360.1" y="780.5" class="lg" text-anchor="middle">150</text>
<text x="458.1" y="780.5" class="lg" text-anchor="middle">200</text>
<text x="556.1" y="780.5" class="lg" text-anchor="middle">250</text>
<text x="654.1" y="780.5" class="lg" text-anchor="middle">300</text>
<text x="752.1" y="780.5" class="lg" text-anchor="middle">350</text>
<text x="457" y="799" class="lg" text-anchor="middle">Relative Microns</text>
<text x="446" y="74" class="ttl" text-anchor="middle">NIST SRM C2402 trav1</text>
</svg>
<div class="spin" style="left:728px">
<div class="b3" style="left:0;top:0;width:12px;height:25px"><svg width="12" height="25"><path d="M7 9v6l-3-3z" fill="#000"/></svg></div>
<div class="b3" style="left:13px;top:0;width:12px;height:25px"><svg width="12" height="25"><path d="M5 9v6l3-3z" fill="#000"/></svg></div>
<div class="b3" style="left:25px;top:0;width:17px;height:12px"><svg width="17" height="12"><path d="M5 7h6l-3-3z" fill="#000"/></svg></div>
<div class="b3" style="left:25px;top:13px;width:17px;height:12px"><svg width="17" height="12"><path d="M5 4h6l-3 3z" fill="#000"/></svg></div>
</div>
<div class="spin" style="left:794px">
<div class="b3" style="left:0;top:0;width:12px;height:25px"><svg width="12" height="25"><path d="M7 9v6l-3-3z" fill="#000"/></svg></div>
<div class="b3" style="left:13px;top:0;width:12px;height:25px"><svg width="12" height="25"><path d="M5 9v6l3-3z" fill="#000"/></svg></div>
<div class="b3" style="left:25px;top:0;width:17px;height:12px"><svg width="17" height="12"><path d="M5 7h6l-3-3z" fill="#000"/></svg></div>
<div class="b3" style="left:25px;top:13px;width:17px;height:12px"><svg width="17" height="12"><path d="M5 4h6l-3 3z" fill="#000"/></svg></div>
</div>
<div class="btn" style="left:887px;top:38px;width:145px;height:25px;background:#c0ffc0;font-weight:bold;line-height:23px"><span id="tClose">Close</span></div>
<div class="grp"></div>
<div class="grpt"><span id="tGO">Graph Options</span></div>
<div class="btn" style="left:895px;top:651px;width:129px;height:24px;background:#ffff80;font-weight:bold;line-height:23px;box-shadow:inset 1px 1px 0 #fff, inset -1px 0 0 #a0a0a0"><span id="tZF" style="left:-1px">Zoom Full</span></div>
<div class="btn" style="left:895px;top:675px;width:129px;height:24px;line-height:21px;border-color:#696969;box-shadow:inset 1px 1px 0 #fff, inset -1px -1px 0 #696969, inset -2px -2px 0 #a0a0a0"><span id="tCB">ClipBoard</span><div style="position:absolute;left:3px;top:3px;right:3px;bottom:2px;border:1px dotted #000"></div></div>
<div class="btn" style="left:895px;top:699px;width:129px;height:25px;line-height:21px"><span id="tPr">Print</span></div>
<div class="edit"></div>
<div class="cb" style="top:765px"></div>
<div class="cb" style="top:781px"><svg width="9" height="9" style="display:block"><path d="M1 3v3h1v1h1v1h1v-1h1v-1h1v-1h1v-1h1v-3h-1v1h-1v1h-1v1h-1v1h-1v-1h-1v-1z" fill="#000" shape-rendering="crispEdges"/></svg></div>
<div class="lbl" style="top:764px"><span id="tDS">Show Date Stamp</span></div>
<div class="lbl" style="top:780px"><span id="tGL">Show Grid Lines</span></div>
</body></html>
